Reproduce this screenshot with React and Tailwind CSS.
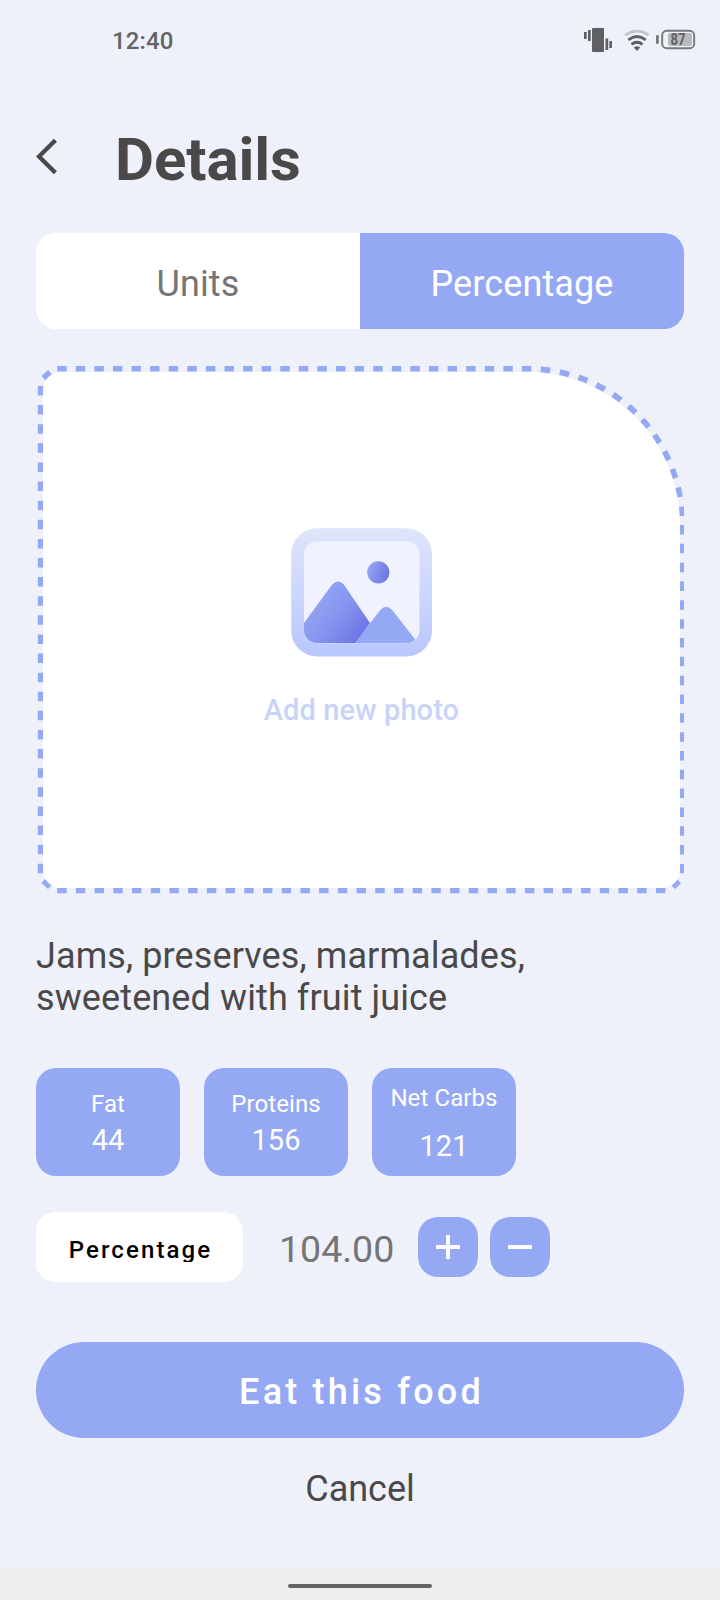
function StatusBar() {
  return (
    <div className="flex h-20 items-start justify-between pr-6 pl-[112px] text-[#636466]">
      <span className="mt-[27px] text-2xl leading-7 font-medium tracking-[0.15px]">12:40</span>
      <svg className="mt-6 h-8 w-[114px]" viewBox="582 24 114 32" fill="none">
        <g fill="#5f6064">
          <rect x="592" y="28" width="12" height="24" rx="1" />
          <rect x="584" y="32" width="2.7" height="7" />
          <rect x="588" y="30" width="2.7" height="11" />
          <rect x="605.5" y="38.5" width="2.7" height="11.5" />
          <rect x="609.3" y="41" width="2.7" height="7" />
          <path d="M637 51l-3.2-3.6q3.2-2.4 6.4 0z" />
        </g>
        <path d="M625.3 35.2q11.7-8.2 23.4 0" stroke="#c4c5ca" strokeWidth="2.8" />
        <g stroke="#5f6064" strokeWidth="2.9">
          <path d="M628.3 39.8q8.7-6.6 17.4 0" />
          <path d="M631.5 44.4q5.5-4.3 11 0" />
        </g>
        <rect x="656" y="35" width="2.8" height="9" rx="1.2" fill="#77787b" />
        <rect x="662.2" y="30.8" width="32" height="17.4" rx="4.5" stroke="#77787b" strokeWidth="1.9" />
        <rect x="668" y="33" width="24" height="13" rx="2" fill="#b8b9bd" />
        <text x="670.5" y="45.2" textLength="15" lengthAdjust="spacingAndGlyphs" fontSize="16" fontWeight="700" fill="#5f6064" fontFamily="Roboto, sans-serif">87</text>
      </svg>
    </div>
  );
}

function PhotoIcon() {
  return (
    <svg className="h-[129px] w-[141px]" viewBox="291 528 141 129">
      <defs>
        <linearGradient id="frame" x1="0" y1="0" x2="0" y2="1">
          <stop offset="0" stopColor="#dfe5fb" />
          <stop offset="1" stopColor="#b9c6ff" />
        </linearGradient>
        <linearGradient id="hill" x1="0.1" y1="0.2" x2="0.95" y2="0.85">
          <stop offset="0" stopColor="#95a8f5" />
          <stop offset="0.5" stopColor="#8695ef" />
          <stop offset="1" stopColor="#6c72e3" />
        </linearGradient>
        <linearGradient id="sun" x1="0" y1="0.3" x2="1" y2="0.65">
          <stop offset="0" stopColor="#95a8f5" />
          <stop offset="1" stopColor="#6c72e0" />
        </linearGradient>
        <clipPath id="pane">
          <rect x="304" y="541" width="115.5" height="102" rx="13" />
        </clipPath>
      </defs>
      <rect x="291.2" y="528.2" width="140.8" height="128.4" rx="26" fill="url(#frame)" />
      <rect x="304" y="541.2" width="115.5" height="102" rx="13" fill="#f0f3ff" />
      <g clipPath="url(#pane)">
        <path d="M304 623L332 584.8Q338 578 344 584.8L370 623L356 643.2H304Z" fill="url(#hill)" />
        <path d="M354.5 643.5L380.5 609.8Q386 603.8 392 609.8L416 640.5L412 644Z" fill="#95a8f4" />
      </g>
      <circle cx="378.3" cy="572.3" r="11.1" fill="url(#sun)" />
    </svg>
  );
}

function DashedOutline() {
  return (
    <svg className="absolute inset-0 h-[528px] w-[648px]" viewBox="36 366 648 528" fill="none" stroke="#95a8f4" strokeWidth="5.8">
      <path d="M57.2 368.6H532" strokeDasharray="9.4 9.19" />
      <path d="M540.7 369.4A154 154 0 0 1 682 518V523" strokeDasharray="9.6 9.75" />
      <path d="M682 525V873.2" strokeDasharray="9.5 9.33" />
      <path d="M57.2 890.3H665.6" strokeDasharray="9.4 9.31" />
      <path d="M40.7 386V873.4" strokeDasharray="9.5 9.61" />
      <path d="M43.4 378.2L50 372.2M43.4 880.8L50 886.8M673 887L679 881.2" />
    </svg>
  );
}

function Stat({ label, value, spread }) {
  return (
    <div className="flex h-[108px] w-36 flex-col items-center justify-center rounded-[20px] bg-[#95a8f4] pt-0.5 text-white">
      <span className="text-2xl leading-7 tracking-[0.1px]">{label}</span>
      <span className={spread ? "mt-[18px] text-[29px] leading-8" : "mt-[6px] text-[29px] leading-8"}>{value}</span>
    </div>
  );
}

function StepButton({ d, label }) {
  return (
    <button aria-label={label} className="flex h-[60px] w-[60px] items-center justify-center rounded-[20px] bg-[#95a8f4]">
      <svg className="h-6 w-6" viewBox="0 0 24 24" stroke="white" strokeWidth="4">
        <path d={d} />
      </svg>
    </button>
  );
}

export default function App() {
  return (
    <div className="flex h-[1600px] w-[720px] flex-col overflow-hidden bg-[#eef1fa] font-['Roboto',sans-serif] text-[#4a4848]">
      <StatusBar />
      <header className="flex h-[153px] items-start pl-9">
        <svg className="mt-[58px] h-[37px] w-[22px]" viewBox="0 0 22 37" fill="none" stroke="#4a4848" strokeWidth="4.4">
          <path d="M19.4 2.2L3 18.5L19.4 34.8" />
        </svg>
        <h1 className="mt-[45px] ml-[57px] text-[60px] leading-[70px] font-bold tracking-[-0.1px]">Details</h1>
      </header>
      <main className="flex flex-1 flex-col px-9">
        <div className="flex h-24 overflow-hidden rounded-[20px] text-4xl leading-[42px] tracking-[0.1px]">
          <button className="w-1/2 bg-white pt-1.5 text-[#757575]">Units</button>
          <button className="w-1/2 bg-[#95a8f4] pt-1.5 text-white">Percentage</button>
        </div>
        <div className="relative mt-[37px] h-[528px] pt-[6px] pr-[4.5px] pb-[6.5px] pl-[7.3px]">
          <DashedOutline />
          <div className="relative flex h-full flex-col items-center rounded-[18px] rounded-tr-[153px] bg-white pt-[156px]">
            <PhotoIcon />
            <span className="mt-[36px] text-[29px] leading-[34px] font-medium tracking-[0.1px] text-[#c9d3fa]">Add new photo</span>
          </div>
        </div>
        <p className="mt-[41px] w-[560px] text-4xl leading-[42px] tracking-[0.11px]">Jams, preserves, marmalades, sweetened with fruit juice</p>
        <div className="mt-[49px] flex gap-6">
          <Stat label="Fat" value="44" />
          <Stat label="Proteins" value="156" />
          <Stat label="Net Carbs" value="121" spread />
        </div>
        <div className="mt-9 flex h-[70px] items-center">
          <button className="flex h-[70px] w-[207px] justify-center rounded-[20px] bg-white pt-6 text-black">
            <span className="h-[26px] overflow-hidden pl-0.5 text-2xl leading-7 font-medium tracking-[2.1px]">Percentage</span>
          </button>
          <span className="mt-1 w-[175px] pl-9 text-[37.5px] leading-[44px] text-[#757575]">104.00</span>
          <div className="flex gap-3">
            <StepButton label="Increase" d="M12 0V24M0 12H24" />
            <StepButton label="Decrease" d="M0 12H24" />
          </div>
        </div>
        <button className="mt-[60px] h-24 rounded-full bg-[#95a8f4] pt-1 pl-[3px] text-4xl leading-[42px] font-medium tracking-[3.2px] text-white">Eat this food</button>
        <button className="mt-[30px] text-4xl leading-[42px]">Cancel</button>
      </main>
      <footer className="flex h-8 items-center justify-center bg-[#efefef] pt-1">
        <div className="h-1 w-36 rounded-full bg-[#636363]" />
      </footer>
    </div>
  );
}
